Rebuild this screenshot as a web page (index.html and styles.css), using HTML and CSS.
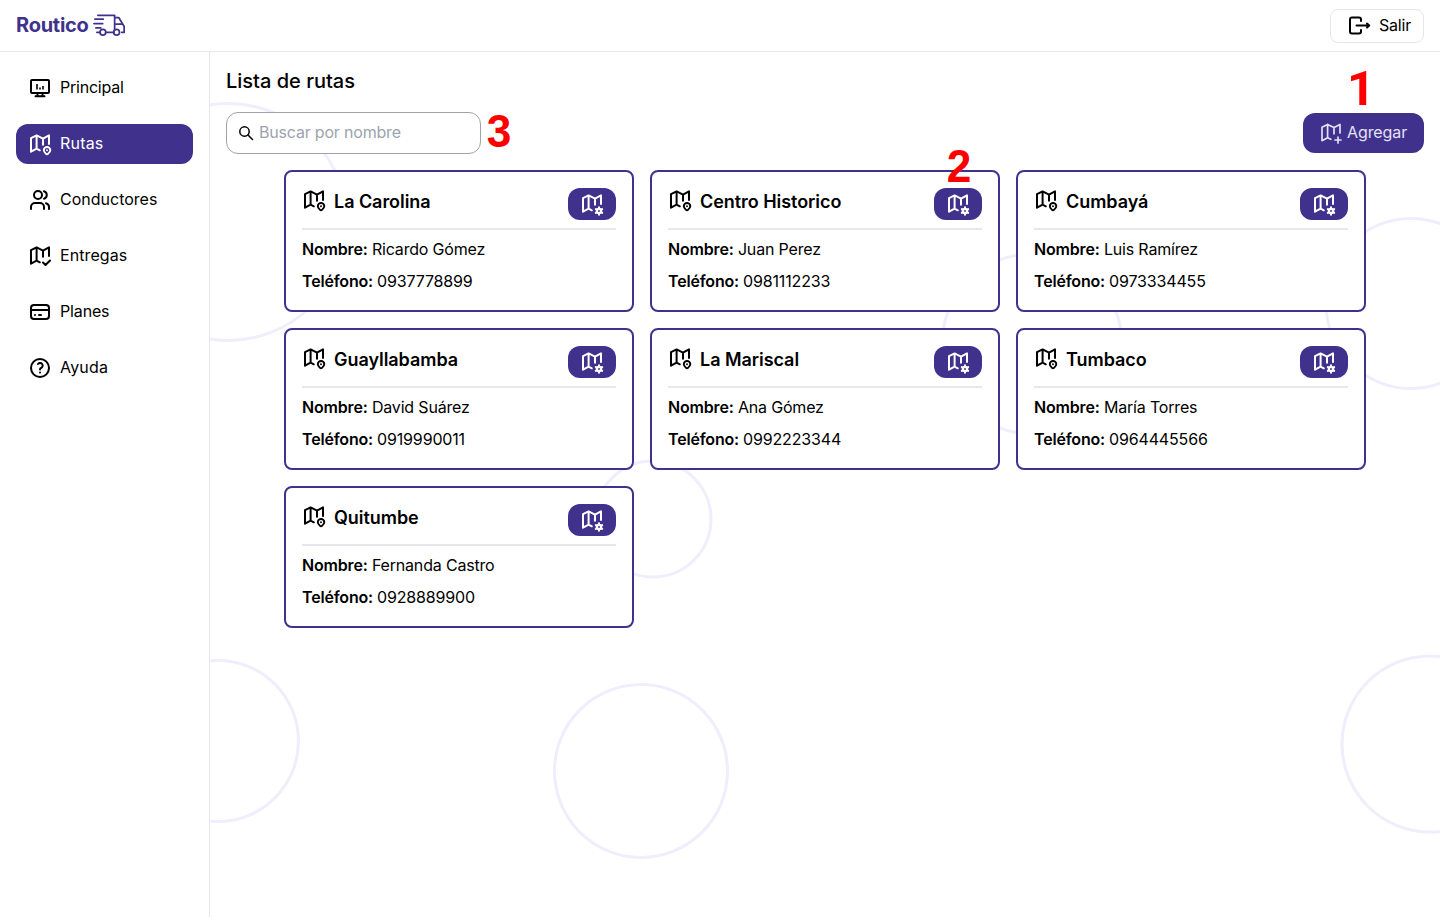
FILE: index.html
```html
<!DOCTYPE html>
<html lang="es">
<head>
<meta charset="utf-8">
<title>Routico - Lista de rutas</title>
<link rel="stylesheet" href="styles.css">
</head>
<body>
<svg class="sprite" aria-hidden="true">
  <symbol id="map" viewBox="0 0 24 24"><path d="M11.800 18.300 8.600 16.700 3 19.700V6.200l5.600-2.800L15 6.600 21 3.400V12M8.600 3.400V16.700M15 6.600v6.200"/></symbol>
  <symbol id="map-pin" viewBox="0 0 24 24"><use href="#map"/><path d="M20 21.900a1.400 1.400 0 0 1-2 0c-1.400-1.200-2.200-2.300-2.200-3.600a3.250 3.250 0 0 1 6.500 0c0 1.300-.9 2.400-2.300 3.600zM19 18.300v.01" stroke-width="1.900"/></symbol>
  <symbol id="map-check" viewBox="0 0 24 24"><use href="#map"/><path d="m15 18.500 2.500 2.500L22 16.500"/></symbol>
  <symbol id="map-plus" viewBox="0 0 24 24"><use href="#map"/><path d="M19 16v6M16 19h6"/></symbol>
  <symbol id="map-cog" viewBox="0 0 24 24"><use href="#map"/><circle cx="19" cy="19" r="2.100" stroke-width="2.300"/><path d="M19 15.300v1.200M19 21.500v1.200M15.800 17.150l1.100.6M21.100 20.250l1.100.6M15.800 20.850l1.100-.6M21.100 17.750l1.100-.6"/></symbol>
</svg>
<div class="app">
  <header class="topbar">
    <div class="brand"><span class="brand-name">Routico</span>
      <svg class="truck" viewBox="0 0 34 24"><path d="M5 2h17.300v15.500M22.300 4.300h4.200l4.200 6.900 1.400 2.300v6h-2.500M22.300 11.200h8.400M2 6h8.500M1 10.500h9M3 15h5M4 19.500h3.500M13 19.500h8.500"/><circle cx="10.200" cy="19.500" r="3"/><circle cx="24.300" cy="19.500" r="3"/></svg>
    </div>
    <button class="logout"><svg class="icon" viewBox="0 0 24 24"><path d="M14 8V6.500a2 2 0 0 0-2-2H5a2 2 0 0 0-2 2v12a2 2 0 0 0 2 2h7a2 2 0 0 0 2-2V17M9.500 12.500h12.500M20 10.500l2.300 2-2.300 2"/></svg><span class="logout-text">Salir</span></button>
  </header>
  <div class="body">
    <nav class="sidebar">
      <a class="nav-item"><svg class="icon" viewBox="0 0 24 24"><path d="M4 4h16a1 1 0 0 1 1 1v11a1 1 0 0 1-1 1H4a1 1 0 0 1-1-1V5a1 1 0 0 1 1-1zM7.500 20.300h9M9.500 17v3M14.500 17v3"/><path class="bars" d="M9 8v5.500M12 11.500v2M15 10v3.500"/></svg><span class="t-principal">Principal</span></a>
      <a class="nav-item active"><svg class="icon"><use href="#map-pin"/></svg><span class="t-rutas">Rutas</span></a>
      <a class="nav-item"><svg class="icon" viewBox="0 0 24 24"><circle cx="10" cy="7" r="4"/><path d="M3 21v-2a4 4 0 0 1 4-4h5a4 4 0 0 1 4 4v2M16 3.200a4 4 0 0 1 0 7.600M21 21v-2a4 4 0 0 0-3-3.800"/></svg><span>Conductores</span></a>
      <a class="nav-item"><svg class="icon"><use href="#map-check"/></svg><span class="t-entregas">Entregas</span></a>
      <a class="nav-item"><svg class="icon" viewBox="0 0 24 24"><rect x="3" y="5" width="18" height="14" rx="3"/><path d="M3 10h18M7 15h.01M11 15h2"/></svg><span class="t-planes">Planes</span></a>
      <a class="nav-item"><svg class="icon" viewBox="0 0 24 24"><circle cx="12" cy="12" r="9"/><path d="M12 16.500v.01M12 13.500a1.500 1.500 0 0 1 1-1.500 2.600 2.600 0 1 0-3-4"/></svg><span class="t-ayuda">Ayuda</span></a>
    </nav>
    <main class="content">
      <svg class="backdrop" viewBox="210 52 1230 865" aria-hidden="true"><circle cx="228" cy="222" r="118.500"/><circle cx="653" cy="519" r="58"/><circle cx="218" cy="741" r="80.500"/><circle cx="641" cy="771" r="86.500"/><circle cx="1430" cy="744" r="88"/><circle cx="1411" cy="303.500" r="85"/><circle cx="1032" cy="344" r="90"/></svg>
      <h1 class="title">Lista de rutas</h1>
      <div class="toolbar">
        <label class="search"><svg class="search-icon" viewBox="0 0 16 16"><circle cx="6.500" cy="6.500" r="4.700"/><path d="m10 10 4.500 4.500"/></svg><span class="placeholder">Buscar por nombre</span><b class="mark mark-3">3</b></label>
        <button class="add"><svg class="icon"><use href="#map-plus"/></svg><span class="add-text">Agregar</span><b class="mark mark-1">1</b></button>
      </div>
      <section class="grid" id="routes"></section>
    </main>
  </div>
</div>
<script src="app.js"></script>
</body>
</html>
```
FILE: styles.css
```css
* { box-sizing: border-box; }
body { margin: 0; font: 400 16px/24px Inter, "Liberation Sans", sans-serif; color: #000; background: #fff; }
button { font: inherit; color: inherit; }
.sprite { position: absolute; width: 0; height: 0; }
svg { fill: none; stroke: currentColor; stroke-width: 2; stroke-linecap: round; stroke-linejoin: round; flex: none; }
.icon { width: 24px; height: 24px; }
.bars { stroke-width: 1.6; stroke-linecap: butt; }
.app { height: 917px; display: flex; flex-direction: column; overflow: hidden; }
.topbar { height: 52px; border-bottom: 1px solid #e5e7eb; padding: 0 16px; display: flex; align-items: center; justify-content: space-between; }
.brand { display: flex; align-items: center; gap: 4px; padding-bottom: 2px; color: #40328c; }
.brand-name { font-size: 20px; font-weight: 700; letter-spacing: -0.25px; }
.truck { width: 33px; height: 24px; stroke-width: 1.8; }
.logout { height: 34px; width: 94px; background: #fff; border: 1px solid #e5e7eb; border-radius: 8px; padding: 0 12px 1px 16px; display: flex; align-items: center; gap: 8px; }
.logout-text { letter-spacing: -0.2px; }
.body { flex: 1; display: flex; min-height: 0; }
.sidebar { width: 210px; border-right: 1px solid #e5e7eb; padding: 16px; display: flex; flex-direction: column; gap: 16px; }
.nav-item { height: 40px; padding: 0 12px; border-radius: 12px; display: flex; align-items: center; gap: 8px; }
.nav-item span { padding-bottom: 2px; }
.t-principal { letter-spacing: -0.22px; }
.t-rutas { letter-spacing: 0.2px; }
.t-entregas { letter-spacing: 0.08px; }
.t-planes { letter-spacing: -0.15px; }
.t-ayuda { letter-spacing: 0.2px; }
.active { background: #40328c; color: #fff; }
.content { flex: 1; position: relative; padding: 15px 16px 16px; display: flex; flex-direction: column; }
.backdrop { position: absolute; inset: 0; width: 100%; height: 100%; stroke: #f0eefc; stroke-width: 3; z-index: -1; }
.title { margin: 0; font-size: 20px; line-height: 28px; font-weight: 500; }
.toolbar { margin-top: 17px; display: flex; justify-content: space-between; align-items: center; }
.search { position: relative; width: 255px; height: 42px; background: #fff; border: 1px solid #a1a1aa; border-radius: 12px; display: flex; align-items: center; padding: 0 0 1px 11px; gap: 5px; }
.search-icon { width: 16px; height: 16px; stroke-width: 1.5; }
.placeholder { color: #9ca3af; letter-spacing: -0.19px; padding-bottom: 1px; }
.add { position: relative; width: 121px; height: 40px; padding: 0 16px; border: 0; border-radius: 12px; background: #40328c; color: #e4e0f7; display: flex; align-items: center; gap: 4px; }
.add .icon { stroke-width: 1.7; }
.add-text { letter-spacing: -0.1px; padding-bottom: 2px; }
.grid { margin-top: 16px; display: grid; grid-template-columns: repeat(3, 350px); gap: 16px; justify-content: center; }
.card { height: 142px; border: 2px solid #40328c; border-radius: 8px; background: #fff; padding: 16px; display: flex; flex-direction: column; }
.card-head { height: 42px; border-bottom: 2px solid #e5e7eb; display: flex; justify-content: space-between; align-items: flex-start; }
.card-title { margin: 0; font-size: 18px; line-height: 28px; font-weight: 600; letter-spacing: -0.05px; display: flex; gap: 8px; }
.edit { position: relative; width: 48px; height: 32px; padding: 0; border: 0; border-radius: 12px; background: #40328c; color: #fff; display: flex; align-items: center; justify-content: center; }
.card p { margin: 0; }
.card p b { font-weight: 600; letter-spacing: -0.18px; }
.row-name { padding-top: 7px; letter-spacing: -0.18px; }
.row-phone { padding-top: 8px; letter-spacing: -0.16px; }
.row-phone b { margin-right: -0.3px; }
.mark { position: absolute; font: 700 47px/47px "Liberation Sans", Arial, sans-serif; color: #f00; transform: scaleX(0.94); }
.mark-1 { left: 44px; top: -48px; font-family: Roboto, Arial, sans-serif; font-size: 49px; transform: none; }
.mark-2 { left: 12px; top: -46px; }
.mark-3 { left: 259px; top: -6px; }
```
FILE: app.js
```js
const routes = [
  ['La Carolina', 'Ricardo Gómez', '0937778899'],
  ['Centro Historico', 'Juan Perez', '0981112233'],
  ['Cumbayá', 'Luis Ramírez', '0973334455'],
  ['Guayllabamba', 'David Suárez', '0919990011'],
  ['La Mariscal', 'Ana Gómez', '0992223344'],
  ['Tumbaco', 'María Torres', '0964445566'],
  ['Quitumbe', 'Fernanda Castro', '0928889900'],
];

document.getElementById('routes').innerHTML = routes.map(([route, name, phone], i) => `
  <article class="card">
    <div class="card-head">
      <h2 class="card-title"><svg class="icon"><use href="#map-pin"/></svg><span>${route}</span></h2>
      <button class="edit"><svg class="icon"><use href="#map-cog"/></svg>${i === 1 ? '<b class="mark mark-2">2</b>' : ''}</button>
    </div>
    <p class="row-name"><b>Nombre:</b> <span>${name}</span></p>
    <p class="row-phone"><b>Teléfono:</b> <span>${phone}</span></p>
  </article>`).join('');
```
